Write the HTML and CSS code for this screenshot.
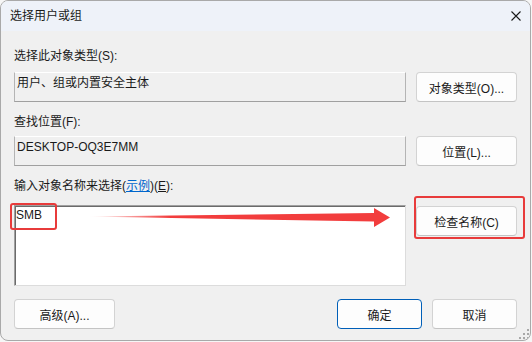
FILE: index.html
```html
<!DOCTYPE html>
<html lang="zh-CN">

<head>
    <meta charset="UTF-8">
    <title>选择用户或组</title>
    <link rel="stylesheet" href="styles.css">
</head>

<body>
    <div class="window">
        <!-- Title bar -->
        <div class="titlebar">
            <span class="title">选择用户或组</span>
            <svg class="close" width="10" height="10" viewBox="0 0 10 10">
                <path d="M0.5 0.5 L9.5 9.5 M9.5 0.5 L0.5 9.5" stroke="#1a1a1a" stroke-width="1.1" fill="none" />
            </svg>
        </div>

        <div class="content">
            <div class="label first">选择此对象类型(S):</div>
            <div class="row">
                <div class="field">用户、组或内置安全主体</div>
                <button class="btn">对象类型(O)...</button>
            </div>

            <div class="label">查找位置(F):</div>
            <div class="row row-location">
                <div class="field">DESKTOP-OQ3E7MM</div>
                <button class="btn">位置(L)...</button>
            </div>

            <div class="label label-names">输入对象名称来选择(<a href="#" class="link">示例</a>)(<u>E</u>):</div>
            <div class="row row-names">
                <div class="names-box">SMB</div>
                <button class="btn btn-check">检查名称(C)</button>
            </div>

            <div class="footer">
                <button class="btn">高级(A)...</button>
                <div class="footer-right">
                    <button class="btn btn-default">确定</button>
                    <button class="btn">取消</button>
                </div>
            </div>
        </div>

        <!-- red annotations over the dialog -->
        <div class="mark mark-smb"></div>
        <div class="mark mark-check"></div>
        <svg class="arrow" width="531" height="341" viewBox="0 0 531 341">
            <defs>
                <linearGradient id="tail" x1="88" y1="0" x2="170" y2="0" gradientUnits="userSpaceOnUse">
                    <stop offset="0" stop-color="#f23d3d" stop-opacity="0" />
                    <stop offset="1" stop-color="#f23d3d" stop-opacity="1" />
                </linearGradient>
            </defs>
            <polygon points="87,216.5 374,213 374,208 390,217.5 374,227 374,221.5" fill="url(#tail)" />
        </svg>

        <svg class="grip" width="10" height="10" viewBox="0 0 10 10">
            <rect x="8" y="0" width="2" height="2" fill="#a8a8a8" />
            <rect x="4" y="4" width="2" height="2" fill="#a8a8a8" />
            <rect x="8" y="4" width="2" height="2" fill="#a8a8a8" />
            <rect x="0" y="8" width="2" height="2" fill="#a8a8a8" />
            <rect x="4" y="8" width="2" height="2" fill="#a8a8a8" />
            <rect x="8" y="8" width="2" height="2" fill="#a8a8a8" />
        </svg>
    </div>
</body>

</html>
```

FILE: styles.css
```css
body {
    margin: 0;
    background-color: #f6f6f6;
    font-family: "Liberation Sans", "Noto Sans CJK SC", sans-serif;
    font-size: 12px;
    color: #1a1a1a;
}

.window {
    position: relative;
    box-sizing: border-box;
    width: 531px;
    height: 341px;
    border: 1px solid #a9a9a9;
    border-radius: 8px;
    background-color: #f0f0f0;
    overflow: hidden;
}

/* Title bar */
.titlebar {
    height: 30px;
    box-sizing: border-box;
    padding: 0 9px 1px 9px;
    display: flex;
    align-items: center;
    justify-content: space-between;
    background-color: #eef2f9;
}

.title {
    line-height: 16px;
}

.content {
    padding: 0 13px;
}

.label {
    height: 16px;
    line-height: 16px;
    margin-top: 12px;
}

.label.first {
    margin-top: 17px;
}

.link {
    color: #0066cc;
}

.row {
    display: grid;
    grid-template-columns: 392px 101px;
    column-gap: 10px;
    margin-top: 8px;
}

.row-location {
    margin-top: 6px;
}

.row-names {
    margin-top: 11px;
    align-items: start;
}

.field {
    box-sizing: border-box;
    height: 30px;
    padding: 2px;
    line-height: 16px;
    border: 1px solid #b4b4b4;
    border-top-color: #ffffff;
    border-bottom-color: #a0a0a0;
}

.names-box {
    box-sizing: border-box;
    height: 81px;
    padding: 1px;
    line-height: 16px;
    background-color: #ffffff;
    border: 1px solid;
    border-color: #a0a0a0 #dcdcdc #dcdcdc #a0a0a0;
    box-shadow: inset 1px 1px 0 #6b6b6b;
}

.btn {
    box-sizing: border-box;
    height: 30px;
    padding: 0;
    font-family: inherit;
    font-size: 12px;
    color: #1a1a1a;
    background-color: #fdfdfd;
    border: 1px solid #d3d3d3;
    border-bottom-color: #c4c4c4;
    border-radius: 4px;
}

.btn-check {
    margin-top: 1px;
}

.footer {
    display: flex;
    justify-content: space-between;
    margin-top: 13px;
}

.footer .btn {
    width: 101px;
}

.footer-right {
    display: flex;
    gap: 10px;
}

.footer-right .btn {
    width: 85px;
}

.btn-default {
    border-color: #005fb8;
}

/* annotations */
.mark {
    position: absolute;
    box-sizing: border-box;
    border: 2px solid #e83b3b;
    border-radius: 3px;
}

.mark-smb {
    left: 9px;
    top: 202px;
    width: 47px;
    height: 27px;
}

.mark-check {
    left: 413px;
    top: 195px;
    width: 111px;
    height: 43px;
}

.arrow {
    position: absolute;
    left: -1px;
    top: -1px;
    pointer-events: none;
}

.grip {
    position: absolute;
    right: 1px;
    bottom: 1px;
}
```
